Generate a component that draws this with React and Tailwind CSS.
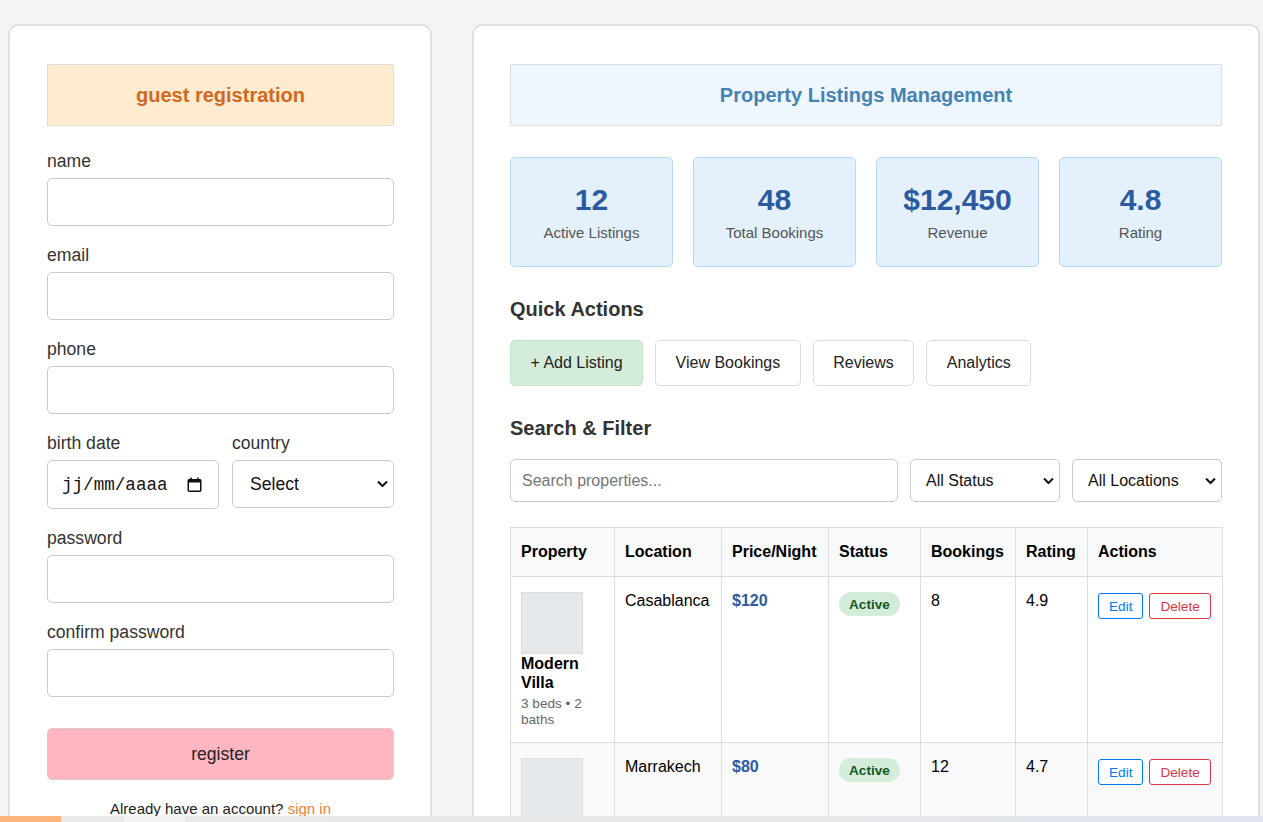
import React from "react";

const font = { fontFamily: '"Liberation Sans", Arial, sans-serif' };

const Chevron = ({ className = "" }) => (
  <svg
    className={className}
    width="11"
    height="7"
    viewBox="0 0 11 7"
    fill="none"
    stroke="#111"
    strokeWidth="2"
  >
    <path d="M1 1l4.5 4.5L10 1" />
  </svg>
);

// fake select so the chevron sits where the reference has it
const Select = ({ value, className = "", textClass = "" }) => (
  <div className={`relative ${className}`}>
    <select
      defaultValue={value}
      className={`w-full h-full appearance-none bg-white border border-[#ccc] rounded-[5px] text-[#111] outline-none ${textClass}`}
    >
      <option>{value}</option>
    </select>
    <Chevron className="absolute right-[6px] top-1/2 -translate-y-1/2 pointer-events-none" />
  </div>
);

const Label = ({ children }) => (
  <label className="block text-[17.6px] leading-[20px] text-[#333] mb-[7px]">{children}</label>
);

const Field = ({ label, type = "text" }) => (
  <div className="mb-[19px]">
    <Label>{label}</Label>
    <input
      type={type}
      className="block w-full h-[48px] border border-[#ccc] rounded-[5px] px-[12px] bg-white outline-none"
    />
  </div>
);

const stats = [
  { value: "12", label: "Active Listings" },
  { value: "48", label: "Total Bookings" },
  { value: "$12,450", label: "Revenue" },
  { value: "4.8", label: "Rating" },
];

const listings = [
  {
    name: "Modern Villa",
    meta: "3 beds • 2 baths",
    location: "Casablanca",
    price: "$120",
    status: "Active",
    bookings: 8,
    rating: "4.9",
  },
  {
    name: "Traditional Riad",
    meta: "4 beds • 3 baths",
    location: "Marrakech",
    price: "$80",
    status: "Active",
    bookings: 12,
    rating: "4.7",
  },
  {
    name: "Beach House",
    meta: "2 beds • 1 bath",
    location: "Agadir",
    price: "$95",
    status: "Active",
    bookings: 6,
    rating: "4.6",
  },
];

const cell = "border border-[#ddd] px-[10px] py-[15px] text-left align-top";

export default function App() {
  return (
    <div className="min-h-screen bg-[#f4f4f4] pt-[24px] pl-[8px] pb-[40px] leading-[normal]" style={font}>
      <div className="flex items-start gap-[40px]">
        {/* Guest registration */}
        <div className="w-[424px] shrink-0 bg-white border-2 border-[#e0e0e0] rounded-[10px] pl-[37px] pr-[36px] pt-[38px] pb-[40px]">
          <div className="h-[62px] flex items-center justify-center bg-[#ffebcf] border border-[#ddd]">
            <h2 className="text-[20px] font-bold text-[#d2691e]">guest registration</h2>
          </div>

          <div className="mt-[25px]">
            <Field label="name" />
            <Field label="email" type="email" />
            <Field label="phone" type="tel" />

            <div className="grid grid-cols-[172px_1fr] gap-x-[13px] mb-[19px]">
              <Label>birth date</Label>
              <Label>country</Label>
              <div className="h-[49px] border border-[#ccc] rounded-[5px] flex items-center justify-between pl-[14px] pr-[16px]">
                <span
                  className="text-[17.6px] text-[#111]"
                  style={{ fontFamily: '"Liberation Mono", "DejaVu Sans Mono", monospace' }}
                >
                  jj/mm/aaaa
                </span>
                <svg width="15" height="15" viewBox="0 0 15 15" fill="none">
                  <rect x="1.25" y="2.75" width="12.5" height="11.5" rx="1" stroke="#111" strokeWidth="1.5" />
                  <rect x="1" y="2.5" width="13" height="3" fill="#111" />
                  <path d="M4 0.5v3M11 0.5v3" stroke="#111" strokeWidth="1.5" />
                </svg>
              </div>
              <Select value="Select" className="h-[48px]" textClass="pl-[17px] text-[17.6px]" />
            </div>

            <Field label="password" type="password" />
            <Field label="confirm password" type="password" />
          </div>

          <button className="mt-[12px] w-full h-[52px] bg-[#ffb6c1] border border-[#e2c9cd] rounded-[5px] text-[17.6px] text-[#222]">
            register
          </button>
          <p className="mt-[20px] text-center text-[15px] text-[#222]">
            Already have an account? <a className="text-[#ee7d32]">sign in</a>
          </p>
        </div>

        {/* Property listings */}
        <div className="w-[788px] shrink-0 bg-white border-2 border-[#e0e0e0] rounded-[10px] px-[36px] pt-[38px] pb-[40px]">
          <div className="h-[62px] flex items-center justify-center bg-[#eff7fe] border border-[#ddd]">
            <h2 className="text-[20px] font-bold text-[#4682b4]">Property Listings Management</h2>
          </div>

          <div className="mt-[31px] grid grid-cols-4 gap-[20px]">
            {stats.map((s) => (
              <div
                key={s.label}
                className="h-[110px] flex flex-col items-center justify-center bg-[#e4f1fd] border border-[#b6d8fa] rounded-[5px]"
              >
                <div className="text-[30px] font-bold text-[#2c5aa0]">{s.value}</div>
                <div className="mt-[7px] text-[15px] text-[#555]">{s.label}</div>
              </div>
            ))}
          </div>

          <h3 className="mt-[31px] text-[20px] font-bold text-[#333]">Quick Actions</h3>
          <div className="mt-[19px] flex gap-[12px]">
            <button className="h-[46px] px-[19.5px] bg-[#d4edda] border border-[#c3e6cb] rounded-[5px] text-[16px] text-[#222]">
              + Add Listing
            </button>
            {["View Bookings", "Reviews", "Analytics"].map((b) => (
              <button
                key={b}
                className="h-[46px] px-[19.5px] bg-white border border-[#ddd] rounded-[5px] text-[16px] text-[#222]"
              >
                {b}
              </button>
            ))}
          </div>

          <h3 className="mt-[31px] text-[20px] font-bold text-[#333]">Search &amp; Filter</h3>
          <div className="mt-[19px] flex gap-[12px]">
            <input
              placeholder="Search properties..."
              className="flex-1 h-[43px] border border-[#ccc] rounded-[5px] px-[11px] text-[16px] placeholder:text-[#757575] outline-none"
            />
            <Select value="All Status" className="w-[150px] h-[43px]" textClass="pl-[15px] text-[16px]" />
            <Select value="All Locations" className="w-[150px] h-[43px]" textClass="pl-[15px] text-[16px]" />
          </div>

          <table className="mt-[25px] w-[712px] table-fixed border-collapse text-[16px] text-black">
            <colgroup>
              <col className="w-[104px]" />
              <col className="w-[107px]" />
              <col className="w-[107px]" />
              <col className="w-[92px]" />
              <col className="w-[95px]" />
              <col className="w-[72px]" />
              <col className="w-[135px]" />
            </colgroup>
            <thead>
              <tr className="bg-[#f8f9fa]">
                {["Property", "Location", "Price/Night", "Status", "Bookings", "Rating", "Actions"].map((h) => (
                  <th key={h} className={`${cell} font-bold`}>
                    {h}
                  </th>
                ))}
              </tr>
            </thead>
            <tbody>
              {listings.map((l, i) => (
                <tr key={l.name} className={i % 2 === 1 ? "bg-[#f9f9f9]" : "bg-white"}>
                  <td className={cell}>
                    <div className="w-[62px] h-[62px] bg-[#e6e9ec] border border-[#ddd]" />
                    <div className="font-bold leading-[19px]">{l.name}</div>
                    <div className="mt-[4px] text-[13.6px] text-[#666] leading-[15.6px]">{l.meta}</div>
                  </td>
                  <td className={cell}>{l.location}</td>
                  <td className={`${cell} font-bold text-[#2c5aa0]`}>{l.price}</td>
                  <td className={cell}>
                    <span className="inline-block px-[10px] py-[4.5px] rounded-[12px] bg-[#d4edda] text-[#155724] text-[13.6px] font-bold">
                      {l.status}
                    </span>
                  </td>
                  <td className={cell}>{l.bookings}</td>
                  <td className={cell}>{l.rating}</td>
                  <td className={cell}>
                    <div className="flex gap-[6px] pt-[1px]">
                      <button className="px-[10px] py-[4.5px] bg-white border border-[#007bff] text-[#007bff] rounded-[3px] text-[13.6px]">
                        Edit
                      </button>
                      <button className="px-[10px] py-[4.5px] bg-white border border-[#dc3545] text-[#dc3545] rounded-[3px] text-[13.6px]">
                        Delete
                      </button>
                    </div>
                  </td>
                </tr>
              ))}
            </tbody>
          </table>
        </div>
      </div>

      {/* bottom strip */}
      <div className="fixed bottom-0 left-0 right-0 h-[6px] flex">
        <div className="w-[61px] bg-[#fdb57c]" />
        <div className="w-[63px] bg-[#e9e9e9]" />
        <div className="w-[61px] bg-[#f3f3f3]" />
        <div className="flex-1 bg-gradient-to-r from-[#e9e9e9] via-[#e8e8e8] to-[#dfe4ee]" />
      </div>
    </div>
  );
}
